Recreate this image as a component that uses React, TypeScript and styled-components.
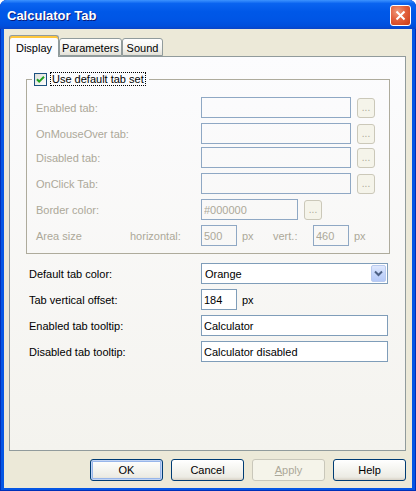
import React from "react";
import styled, { createGlobalStyle } from "styled-components";

const GlobalStyle = createGlobalStyle`
  html, body {
    margin: 0;
    padding: 0;
    background: #ffffff;
  }
  body {
    font-family: "Liberation Sans", Arial, sans-serif;
    font-size: 11px;
  }
  * {
    box-sizing: border-box;
  }
`;

const DISABLED = "#aca899";

const Window = styled.div`
  width: 416px;
  height: 491px;
  display: flex;
  flex-direction: column;
  background: #0556e4;
  border-radius: 7px 7px 0 0;
  box-shadow: inset 1px 0 #0030b8, inset -1px 0 #0030b8, inset 0 -1px #0030b8;
  overflow: hidden;
`;

const TitleBar = styled.div`
  height: 29px;
  flex: none;
  display: flex;
  align-items: center;
  justify-content: space-between;
  padding: 0 5px 0 7px;
  background: linear-gradient(
    to bottom,
    #3d93ff 0%,
    #0a64f0 12%,
    #0058e8 40%,
    #0055e5 70%,
    #004fdc 90%,
    #0b44c6 100%
  );
`;

const Title = styled.span`
  color: #ffffff;
  font-family: "Liberation Sans", Arial, sans-serif;
  font-weight: bold;
  font-size: 13px;
  text-shadow: 1px 1px #0a1a7a;
  margin-top: 1px;
`;

const CloseButton = styled.div`
  width: 21px;
  height: 21px;
  margin-top: 1px;
  border: 1px solid #ffffff;
  border-radius: 3px;
  background: radial-gradient(circle at 35% 30%, #ef9a7c 0%, #e2603c 45%, #c93a14 100%);
  display: flex;
  align-items: center;
  justify-content: center;
`;

const Client = styled.div`
  flex: 1;
  margin: 0 4px 3px 4px;
  background: #ece9d8;
  display: flex;
  flex-direction: column;
  padding: 6px 6px 7px 5px;
  color: #000000;
`;

const TabStrip = styled.div`
  height: 22px;
  flex: none;
  display: flex;
  align-items: flex-end;
  margin-bottom: -1px;
  position: relative;
  z-index: 1;
`;

const Tab = styled.div<{ $active?: boolean; $w: number }>`
  width: ${(p) => p.$w}px;
  height: ${(p) => (p.$active ? "22px" : "18px")};
  margin-bottom: ${(p) => (p.$active ? "0" : "1px")};
  padding-top: ${(p) => (p.$active ? "3px" : "1px")};
  border: 1px solid #919b9c;
  border-bottom: ${(p) => (p.$active ? "none" : "1px solid #919b9c")};
  border-radius: 3px 3px 0 0;
  background: ${(p) =>
    p.$active ? "#fcfcfe" : "linear-gradient(to bottom, #ffffff 0%, #f3f3ef 60%, #e3e1d8 100%)"};
  box-shadow: ${(p) => (p.$active ? "inset 0 2px 0 #ffc73c, inset 0 1px 0 #e68b2c" : "none")};
  display: flex;
  align-items: center;
  justify-content: center;
  white-space: nowrap;
`;

const Panel = styled.div`
  flex: 1;
  border: 1px solid #919b9c;
  background: linear-gradient(to bottom, #fcfcfe 0%, #f4f3ee 100%);
  padding: 15px 15px 0 16px;
  display: flex;
  flex-direction: column;
`;

const Group = styled.fieldset`
  margin: 0;
  border: 1px solid #aeab9c;
  border-radius: 0;
  padding: 11px 14px 7px 9px;
  display: flex;
  flex-direction: column;
  gap: 5px;
  min-width: 0;
`;

const Legend = styled.legend`
  padding: 0 3px 0 2px;
  margin-left: -4px;
  display: flex;
  align-items: center;
  gap: 3px;
  height: 14px;
`;

const FocusLabel = styled.span`
  border: 1px dotted #000000;
  padding: 0 1px;
  line-height: 12px;
  color: #000000;
`;

const Row = styled.div<{ $pull?: number }>`
  display: flex;
  align-items: center;
  height: 21px;
  margin-top: ${(p) => (p.$pull ? `-${p.$pull}px` : "0")};
`;

const Label = styled.span<{ $w: number; $disabled?: boolean }>`
  width: ${(p) => p.$w}px;
  flex: none;
  color: ${(p) => (p.$disabled ? DISABLED : "#000000")};
  white-space: nowrap;
`;

const Unit = styled.span<{ $disabled?: boolean; $w?: number }>`
  color: ${(p) => (p.$disabled ? DISABLED : "#000000")};
  margin-left: 5px;
  width: ${(p) => (p.$w ? `${p.$w}px` : "auto")};
  flex: none;
`;

const Field = styled.input<{ $w: number; $disabled?: boolean }>`
  width: ${(p) => p.$w}px;
  height: 21px;
  flex: none;
  border: 1px solid ${(p) => (p.$disabled ? "#8fa8c4" : "#7f9db9")};
  background: ${(p) => (p.$disabled ? "transparent" : "#ffffff")};
  color: ${(p) => (p.$disabled ? DISABLED : "#000000")};
  -webkit-text-fill-color: ${(p) => (p.$disabled ? DISABLED : "#000000")};
  font-family: "Liberation Sans", Arial, sans-serif;
  font-size: 11px;
  padding: 0 2px;
  margin: 0;
  outline: none;
  border-radius: 0;
`;

const DotsButton = styled.div`
  width: 18px;
  height: 20px;
  flex: none;
  margin-left: 6px;
  border: 1px solid #cbc8b9;
  border-radius: 3px;
  background: #f5f4ea;
  color: ${DISABLED};
  font-size: 10px;
  display: flex;
  align-items: flex-end;
  justify-content: center;
  padding-bottom: 4px;
`;

const Lower = styled.div`
  margin-top: 9px;
  padding-left: 3px;
  display: flex;
  flex-direction: column;
  gap: 5px;
`;

const Select = styled.div`
  width: 187px;
  height: 21px;
  border: 1px solid #7f9db9;
  background: #ffffff;
  display: flex;
  align-items: center;
  justify-content: space-between;
  padding: 1px 1px 1px 3px;
`;

const SelectArrow = styled.div`
  width: 15px;
  height: 17px;
  border: 1px solid #b9cbef;
  border-radius: 2px;
  background: linear-gradient(to bottom, #e0e9fd 0%, #c5d6fb 50%, #b5c9f7 100%);
  display: flex;
  align-items: center;
  justify-content: center;
`;

const ButtonRow = styled.div`
  flex: none;
  margin-top: 8px;
  height: 22px;
  display: flex;
  justify-content: flex-end;
  gap: 8px;
`;

const Button = styled.div<{ $default?: boolean; $disabled?: boolean }>`
  width: 73px;
  height: 22px;
  border: 1px solid ${(p) => (p.$disabled ? "#c9c7ba" : "#003c74")};
  border-radius: 3px;
  background: ${(p) =>
    p.$disabled
      ? "#f5f4ea"
      : "linear-gradient(to bottom, #ffffff 0%, #f6f6f2 40%, #ecebe4 85%, #d8d2c6 100%)"};
  box-shadow: ${(p) => (p.$default ? "inset 0 0 0 1px #c2d4f4, inset 0 0 0 2px #98b6ea" : "none")};
  color: ${(p) => (p.$disabled ? DISABLED : "#000000")};
  display: flex;
  align-items: center;
  justify-content: center;
`;

const groupRows = [
  { label: "Enabled tab:" },
  { label: "OnMouseOver tab:" },
  { label: "Disabled tab:", pull: 2 },
  { label: "OnClick Tab:" },
];

function CheckBox() {
  return (
    <svg width="13" height="13" viewBox="0 0 13 13">
      <defs>
        <linearGradient id="cb" x1="0" y1="0" x2="1" y2="1">
          <stop offset="0" stopColor="#dcdcd7" />
          <stop offset="1" stopColor="#ffffff" />
        </linearGradient>
      </defs>
      <rect x="0.5" y="0.5" width="12" height="12" fill="url(#cb)" stroke="#1c5180" />
      <path d="M3 6.2 L5.2 8.6 L10 3.8" fill="none" stroke="#21a121" strokeWidth="2" />
    </svg>
  );
}

export default function App() {
  return (
    <>
      <GlobalStyle />
      <Window>
        <TitleBar>
          <Title>Calculator Tab</Title>
          <CloseButton>
            <svg width="11" height="11" viewBox="0 0 11 11">
              <path d="M1.5 1.5 L9.5 9.5 M9.5 1.5 L1.5 9.5" stroke="#ffffff" strokeWidth="2" />
            </svg>
          </CloseButton>
        </TitleBar>
        <Client>
          <TabStrip>
            <Tab $active $w={50}>
              Display
            </Tab>
            <Tab $w={63}>Parameters</Tab>
            <Tab $w={41}>Sound</Tab>
          </TabStrip>
          <Panel>
            <Group>
              <Legend>
                <CheckBox />
                <FocusLabel>Use default tab set</FocusLabel>
              </Legend>
              {groupRows.map((r) => (
                <Row key={r.label} $pull={r.pull}>
                  <Label $w={165} $disabled>
                    {r.label}
                  </Label>
                  <Field $w={150} $disabled readOnly defaultValue="" />
                  <DotsButton>...</DotsButton>
                </Row>
              ))}
              <Row>
                <Label $w={165} $disabled>
                  Border color:
                </Label>
                <Field $w={97} $disabled readOnly defaultValue="#000000" />
                <DotsButton>...</DotsButton>
              </Row>
              <Row>
                <Label $w={94} $disabled>
                  Area size
                </Label>
                <Label $w={71} $disabled>
                  horizontal:
                </Label>
                <Field $w={36} $disabled readOnly defaultValue="500" />
                <Unit $disabled $w={31}>
                  px
                </Unit>
                <Label $w={40} $disabled>
                  vert.:
                </Label>
                <Field $w={36} $disabled readOnly defaultValue="460" />
                <Unit $disabled>px</Unit>
              </Row>
            </Group>
            <Lower>
              <Row>
                <Label $w={172}>Default tab color:</Label>
                <Select>
                  <span>Orange</span>
                  <SelectArrow>
                    <svg width="9" height="7" viewBox="0 0 9 7">
                      <path d="M1 1.5 L4.5 5 L8 1.5" fill="none" stroke="#4d6185" strokeWidth="2" />
                    </svg>
                  </SelectArrow>
                </Select>
              </Row>
              <Row>
                <Label $w={172}>Tab vertical offset:</Label>
                <Field $w={36} readOnly defaultValue="184" />
                <Unit>px</Unit>
              </Row>
              <Row>
                <Label $w={172}>Enabled tab tooltip:</Label>
                <Field $w={187} readOnly defaultValue="Calculator" />
              </Row>
              <Row>
                <Label $w={172}>Disabled tab tooltip:</Label>
                <Field $w={187} readOnly defaultValue="Calculator disabled" />
              </Row>
            </Lower>
          </Panel>
          <ButtonRow>
            <Button $default>OK</Button>
            <Button>Cancel</Button>
            <Button $disabled>
              <u>A</u>pply
            </Button>
            <Button>Help</Button>
          </ButtonRow>
        </Client>
      </Window>
    </>
  );
}
